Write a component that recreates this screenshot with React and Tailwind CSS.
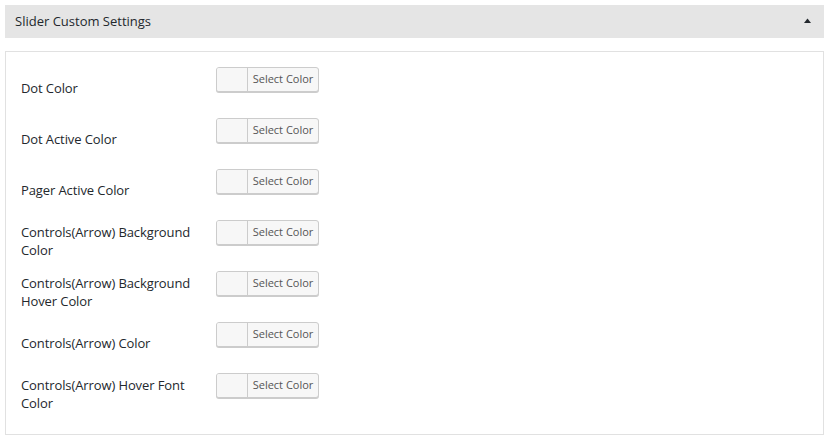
import React from "react";

const rows = [
  ["Dot Color"],
  ["Dot Active Color"],
  ["Pager Active Color"],
  ["Controls(Arrow) Background", "Color"],
  ["Controls(Arrow) Background", "Hover Color"],
  ["Controls(Arrow) Color"],
  ["Controls(Arrow) Hover Font", "Color"],
];

function ColorButton() {
  return (
    <div className="mt-[4px] flex h-[25px] w-[103px] self-start overflow-hidden rounded-[3px] border border-[#cccccc] bg-[#f7f7f7] shadow-[0_1px_0_#cccccc]">
      <div className="w-[31px] border-r border-[#cccccc] bg-[#f7f7f7]" />
      <div className="flex flex-1 items-center justify-center text-[11px] text-[#555555]">
        Select Color
      </div>
    </div>
  );
}

export default function App() {
  return (
    <div
      className="w-[829px] h-[439px] bg-white px-[5px] pt-[5px] text-[#23282d]"
      style={{ fontFamily: '"Open Sans", "Noto Sans", sans-serif' }}
    >
      <div className="flex h-[33px] items-center justify-between bg-[#e5e5e5] pl-[10px] pr-[13px]">
        <span className="text-[13px] text-[#23282d]">Slider Custom Settings</span>
        <svg width="7" height="5" viewBox="0 0 7 5" className="mb-[2px]">
          <path d="M0 5 L3.5 0.5 L7 5 Z" fill="#23282d" />
        </svg>
      </div>
      <div className="mt-[13px] border border-[#e1e1e1] bg-white pl-[15px] pt-[11px] pb-[14px]">
        {rows.map((lines, i) => (
          <div key={i} className="flex h-[51px]">
            <div className="flex w-[195px] flex-col justify-center pb-[2px] text-[13px] leading-[18px] font-medium tracking-[-0.1px] text-[#23282d]">
              {lines.map((l, j) => (
                <span key={j}>{l}</span>
              ))}
            </div>
            <ColorButton />
          </div>
        ))}
      </div>
    </div>
  );
}
